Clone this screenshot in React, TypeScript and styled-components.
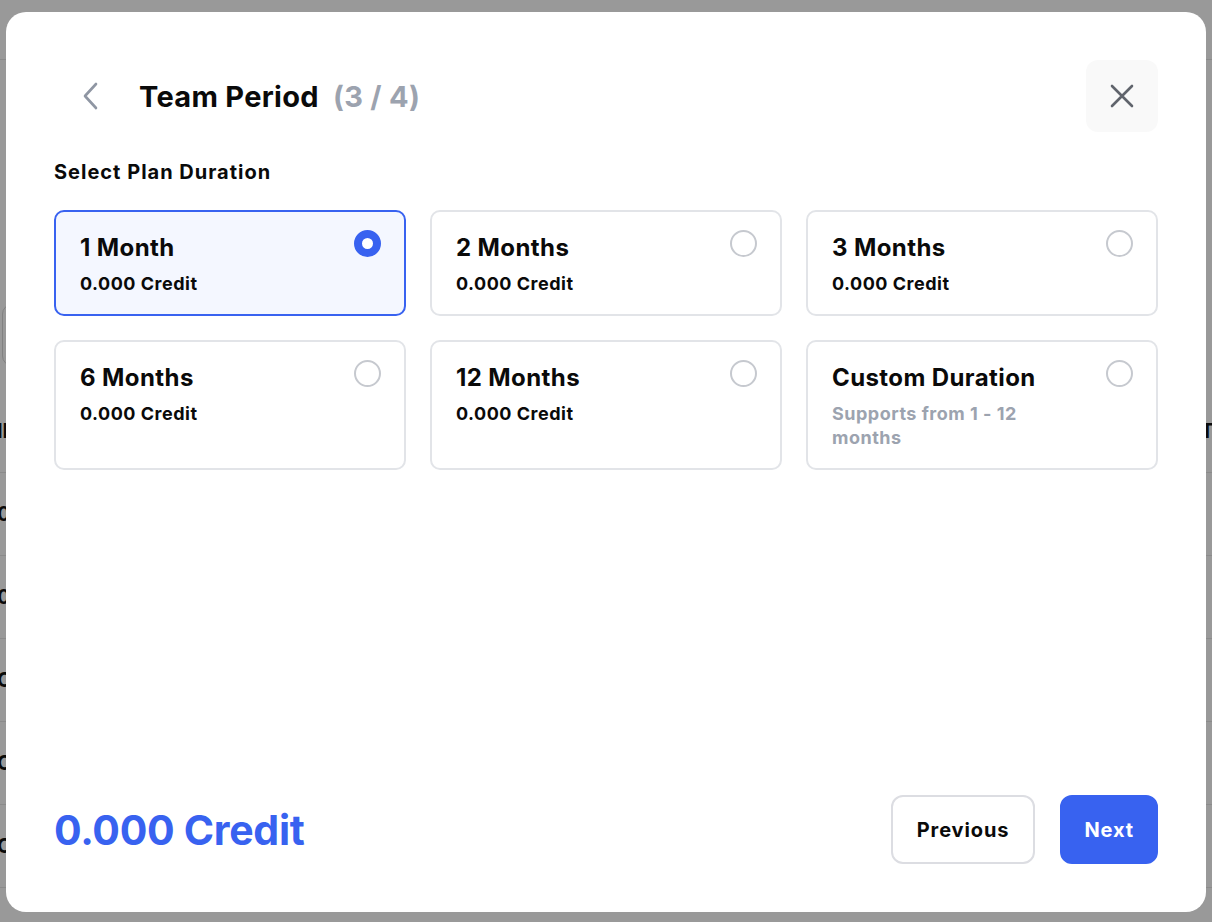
import React, { useState } from 'react';
import styled, { createGlobalStyle } from 'styled-components';

const GlobalStyle = createGlobalStyle`
  * { box-sizing: border-box; }
  html, body {
    margin: 0;
    padding: 0;
    width: 100%;
    height: 100%;
    overflow: hidden;
    font-family: Inter, "Noto Sans", "Liberation Sans", sans-serif;
    -webkit-font-smoothing: antialiased;
  }
`;

const Page = styled.div`
  width: 1212px;
  height: 922px;
  background: #ffffff;
  overflow: hidden;
  position: relative;
`;

const TopBar = styled.div`
  height: 60px;
  border-bottom: 1px solid #e6e6e6;
`;

const Toolbar = styled.div`
  height: 330px;
  padding-top: 244px;
`;

const SearchBox = styled.div`
  width: 300px;
  height: 62px;
  margin-left: 2px;
  border: 1px solid #d8d8d8;
  border-radius: 10px;
`;

const Row = styled.div`
  height: 83px;
  display: flex;
  align-items: center;
  justify-content: space-between;
  border-bottom: 1px solid #e8e8e8;
  font-size: 20px;
  font-weight: 700;
  color: #111;
`;

const CellLeft = styled.span`
  margin-left: -3px;
`;

const CellRight = styled.span`
  margin-right: -14px;
`;

const Overlay = styled.div`
  position: absolute;
  inset: 0;
  background: rgba(0, 0, 0, 0.4);
  display: flex;
  align-items: flex-start;
  justify-content: center;
  padding-top: 12px;
`;

const Modal = styled.div`
  width: 1200px;
  height: 900px;
  background: #ffffff;
  border-radius: 20px;
  padding: 48px;
  display: flex;
  flex-direction: column;
`;

const Header = styled.div`
  display: flex;
  align-items: center;
  height: 72px;
`;

const BackButton = styled.button`
  width: 72px;
  height: 72px;
  border: none;
  background: transparent;
  padding: 0;
  display: flex;
  align-items: center;
  justify-content: center;
  color: #8f96a3;
  cursor: pointer;
`;

const Title = styled.h2`
  margin: 0 0 0 13px;
  font-size: 29px;
  font-weight: 700;
  color: #0a0a0a;
  letter-spacing: 0.3px;
  flex: 1;
`;

const Step = styled.span`
  color: #9ca3af;
  margin-left: 14px;
`;

const CloseButton = styled.button`
  width: 72px;
  height: 72px;
  border: none;
  border-radius: 12px;
  background: #f9f9f9;
  display: flex;
  align-items: center;
  justify-content: center;
  color: #60646c;
  cursor: pointer;
`;

const Label = styled.div`
  margin-top: 26px;
  font-size: 20px;
  font-weight: 700;
  color: #0a0a0a;
  line-height: 28px;
  letter-spacing: 1px;
`;

const Grid = styled.div`
  margin-top: 24px;
  display: grid;
  grid-template-columns: repeat(3, 1fr);
  gap: 24px;
`;

const Card = styled.div<{ $active: boolean }>`
  position: relative;
  border: 2px solid ${(p) => (p.$active ? '#3862f0' : '#e2e4e8')};
  background: ${(p) => (p.$active ? '#f4f7ff' : '#ffffff')};
  border-radius: 10px;
  padding: 22px 72px 18px 24px;
  cursor: pointer;
`;

const CardTitle = styled.div`
  font-size: 24px;
  font-weight: 700;
  color: #0a0a0a;
  line-height: 28px;
  letter-spacing: 0.4px;
`;

const CardSub = styled.div<{ $muted?: boolean }>`
  margin-top: 10px;
  max-width: 220px;
  font-size: 18px;
  font-weight: 700;
  line-height: 24px;
  color: ${(p) => (p.$muted ? '#9ca3af' : '#0a0a0a')};
  letter-spacing: 0.5px;
`;

const Radio = styled.span<{ $active: boolean }>`
  position: absolute;
  top: 18px;
  right: 23px;
  width: 27px;
  height: 27px;
  border-radius: 50%;
  border: ${(p) => (p.$active ? '8.5px solid #3862f0' : '2px solid #c6c9cf')};
  background: #ffffff;
`;

const Spacer = styled.div`
  flex: 1;
`;

const Footer = styled.div`
  display: flex;
  align-items: center;
  gap: 25px;
`;

const Total = styled.div`
  flex: 1;
  font-size: 41px;
  font-weight: 700;
  color: #3862f0;
  letter-spacing: -0.3px;
`;

const Button = styled.button<{ $primary?: boolean }>`
  height: 69px;
  padding: 0 ${(p) => (p.$primary ? '22px' : '24px')};
  border-radius: 12px;
  font-family: inherit;
  font-size: 20px;
  font-weight: 700;
  letter-spacing: 0.9px;
  cursor: pointer;
  border: 2px solid ${(p) => (p.$primary ? '#3862f0' : '#dcdde2')};
  background: ${(p) => (p.$primary ? '#3862f0' : '#ffffff')};
  color: ${(p) => (p.$primary ? '#ffffff' : '#0a0a0a')};
`;

const options = [
  { title: '1 Month', sub: '0.000 Credit' },
  { title: '2 Months', sub: '0.000 Credit' },
  { title: '3 Months', sub: '0.000 Credit' },
  { title: '6 Months', sub: '0.000 Credit' },
  { title: '12 Months', sub: '0.000 Credit' },
  { title: 'Custom Duration', sub: 'Supports from 1 - 12 months', muted: true }
];

const rows = [
  ['ID', 'RATE'],
  ['0', '3'],
  ['0', '3'],
  ['C', '2'],
  ['C', '7'],
  ['C', '7']
];

const ChevronLeft = () => (
  <svg width="16" height="28" viewBox="0 0 16 28" fill="none">
    <path d="M14 2 L3 14 L14 26" stroke="currentColor" strokeWidth="2.6" strokeLinecap="round" strokeLinejoin="round" />
  </svg>
);

const CloseIcon = () => (
  <svg width="24" height="24" viewBox="0 0 24 24" fill="none">
    <path d="M2 2 L22 22 M22 2 L2 22" stroke="currentColor" strokeWidth="2.6" strokeLinecap="round" />
  </svg>
);

export default function App() {
  const [selected, setSelected] = useState(0);

  return (
    <>
      <GlobalStyle />
      <Page>
        <TopBar />
        <Toolbar>
          <SearchBox />
        </Toolbar>
        {rows.map((r, i) => (
          <Row key={i}>
            <CellLeft>{r[0]}</CellLeft>
            <CellRight>{r[1]}</CellRight>
          </Row>
        ))}
        <Overlay>
          <Modal>
            <Header>
              <BackButton aria-label="Back">
                <ChevronLeft />
              </BackButton>
              <Title>
                Team Period<Step>(3 / 4)</Step>
              </Title>
              <CloseButton aria-label="Close">
                <CloseIcon />
              </CloseButton>
            </Header>

            <Label>Select Plan Duration</Label>

            <Grid>
              {options.map((o, i) => (
                <Card key={o.title} $active={selected === i} onClick={() => setSelected(i)}>
                  <CardTitle>{o.title}</CardTitle>
                  <CardSub $muted={o.muted}>{o.sub}</CardSub>
                  <Radio $active={selected === i} />
                </Card>
              ))}
            </Grid>

            <Spacer />

            <Footer>
              <Total>0.000 Credit</Total>
              <Button>Previous</Button>
              <Button $primary>Next</Button>
            </Footer>
          </Modal>
        </Overlay>
      </Page>
    </>
  );
}
